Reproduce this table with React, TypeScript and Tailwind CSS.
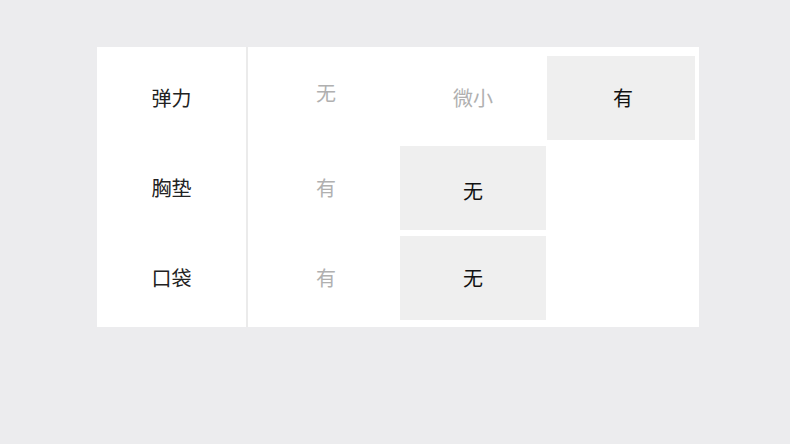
const rows = [
  { label: "弹力", cells: ["无", "微小", "有"], active: 2 },
  { label: "胸垫", cells: ["有", "无", ""], active: 1 },
  { label: "口袋", cells: ["有", "无", ""], active: 1 },
]

export default function App() {
  return (
    <div
      className="w-[790px] h-[444px] bg-[#ececee] pt-[47px] pl-[97px]"
      style={{ fontFamily: '"Noto Sans CJK SC", "Noto Sans", sans-serif' }}
    >
      <div className="flex w-[602px] h-[280px] bg-white">
        {/* labels */}
        <div className="w-[150px] flex flex-col gap-[6px] pt-[9px] pb-[7px]">
          {rows.map((r) => (
            <div key={r.label} className="h-[84px] flex items-center justify-center text-[20px] leading-none text-[#222]">
              {r.label}
            </div>
          ))}
        </div>
        <div className="w-[2px] bg-[#ebebeb]" />
        {/* options */}
        <div className="grid grid-cols-[151px_146px_148px] gap-x-[1px] gap-y-[6px] pt-[9px] pb-[7px] pr-[4px]">
          {rows.map((r, ri) =>
            r.cells.map((c, ci) => {
              const active = ci === r.active
              let shift = ""
              if (ci === 0) shift = "pl-[5px]"
              if (ri === 0 && ci === 0) shift = "pl-[5px] pb-[10px]"
              if (ri === 0 && ci === 2) shift = "pl-[4px]"
              if (ri === 1 && ci === 1) shift = "pt-[6px]"
              return (
                <div
                  key={ri + "-" + ci}
                  className={`h-[84px] flex items-center justify-center text-[20px] leading-none ${shift} ${
                    active ? "bg-[#efefef] text-[#111]" : "text-[#b0b0b0]"
                  }`}
                >
                  {c}
                </div>
              )
            })
          )}
        </div>
      </div>
    </div>
  )
}
